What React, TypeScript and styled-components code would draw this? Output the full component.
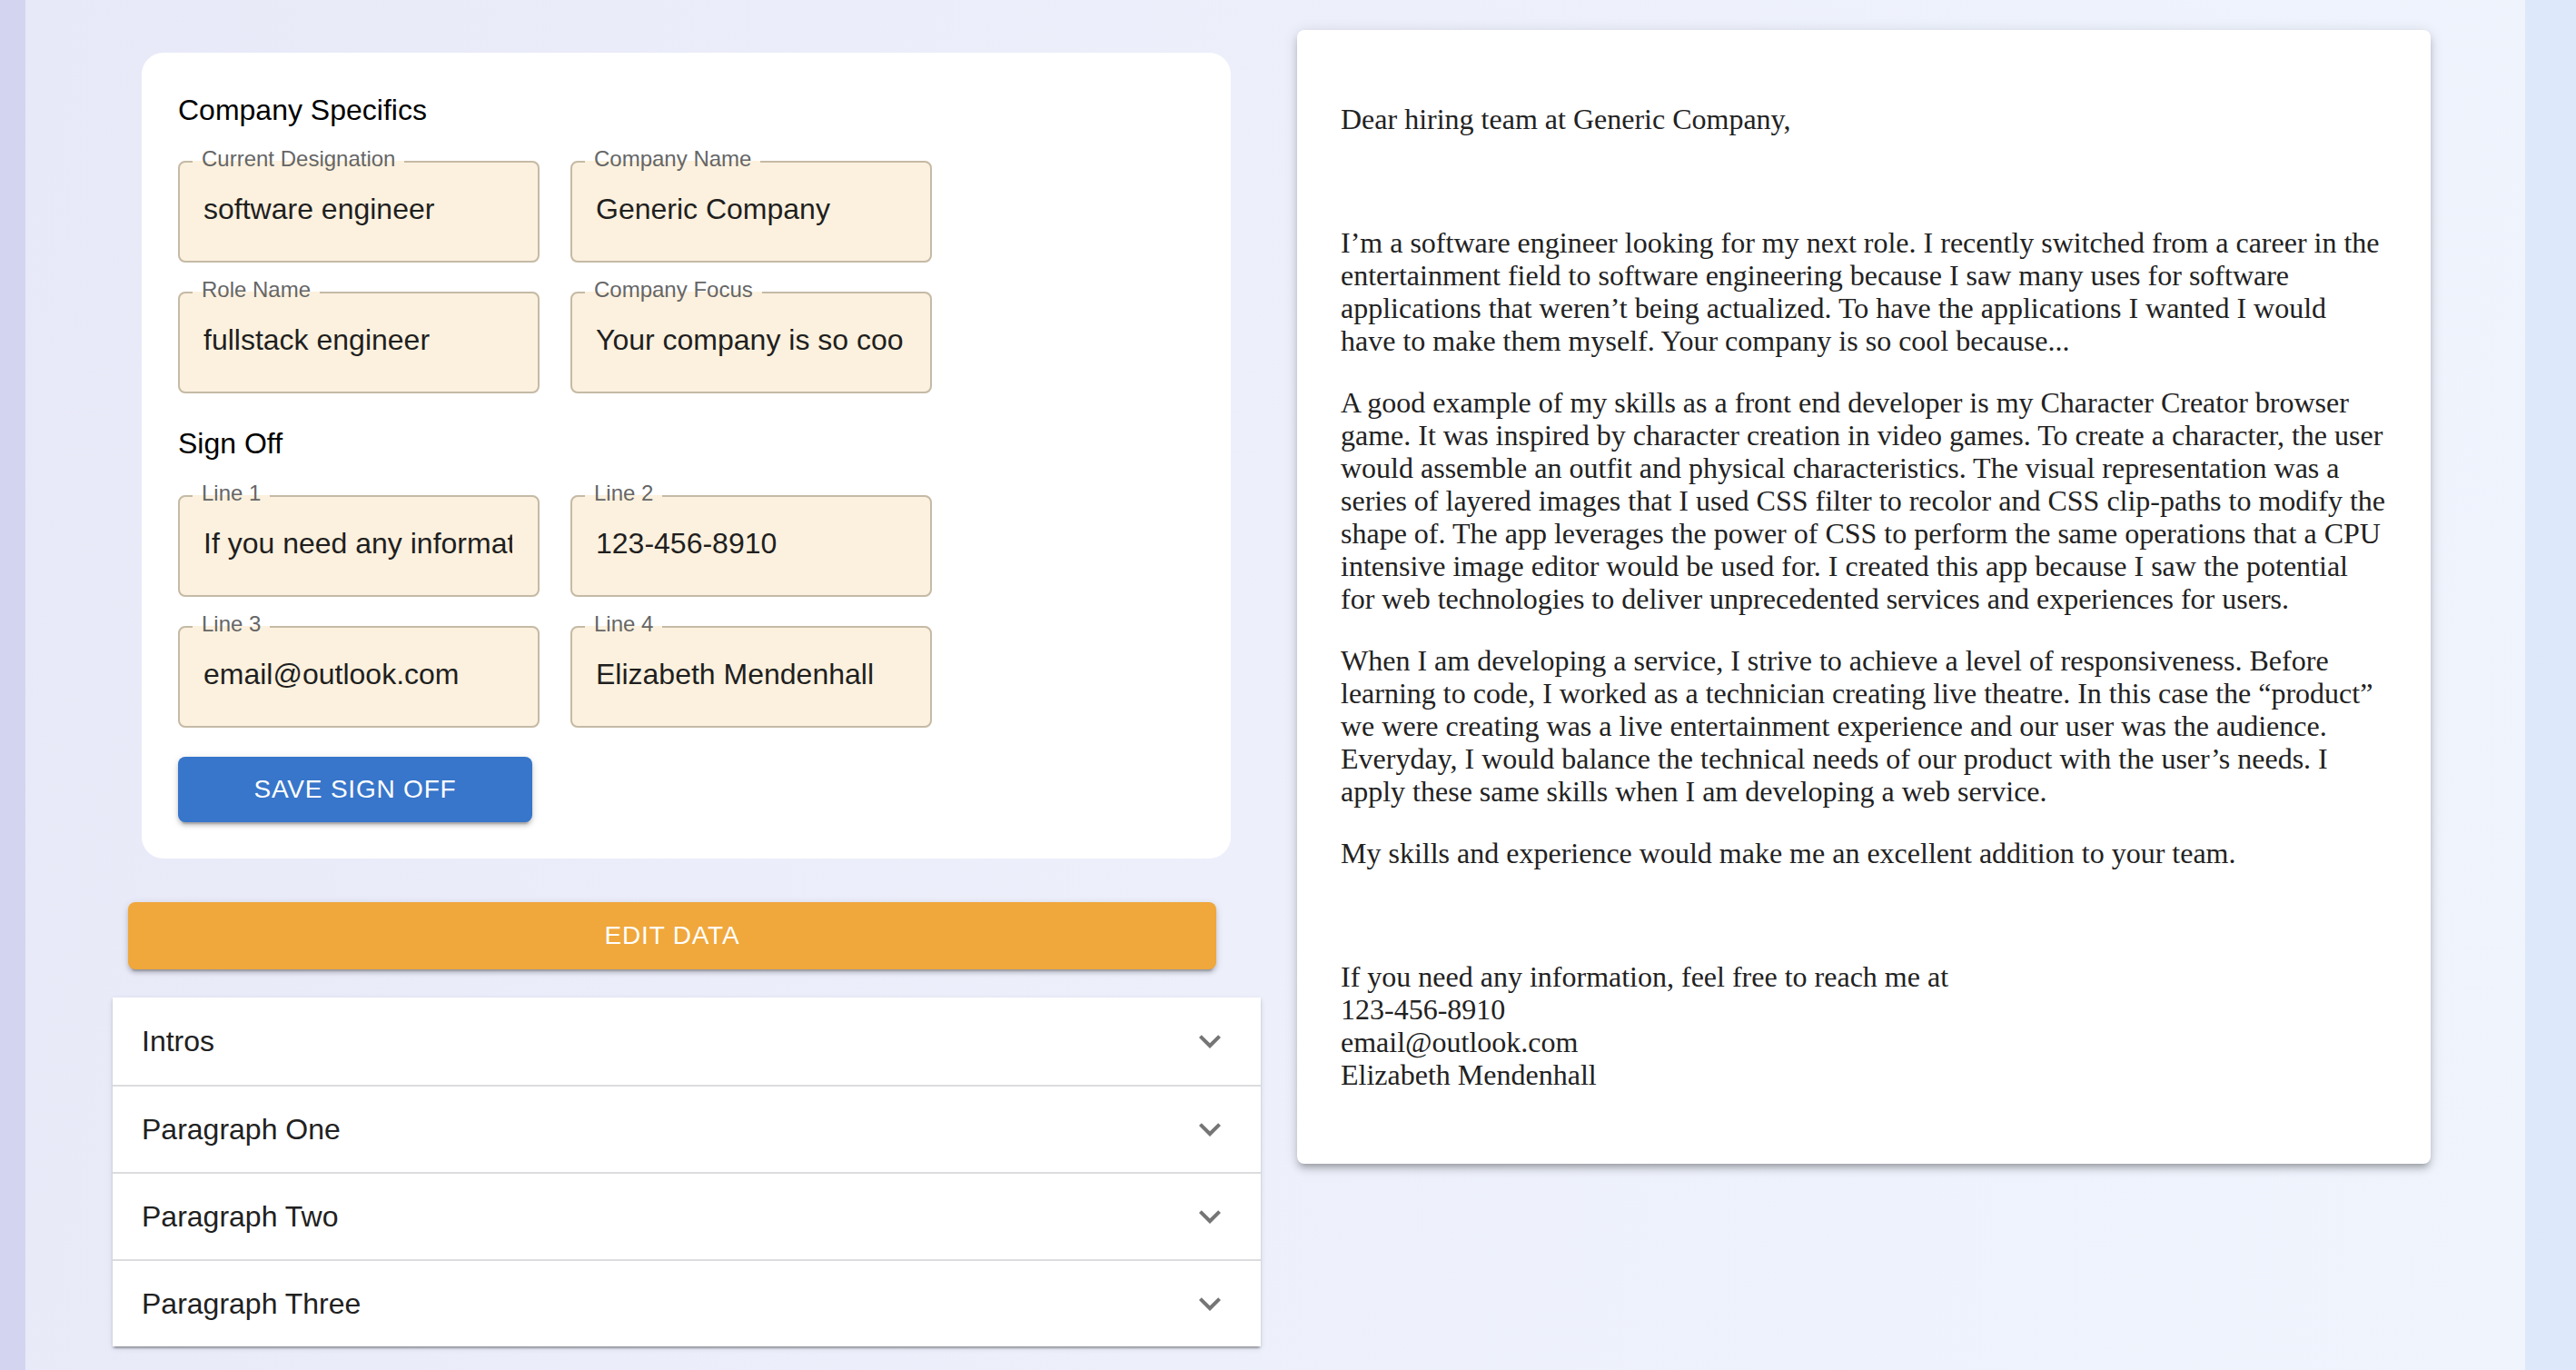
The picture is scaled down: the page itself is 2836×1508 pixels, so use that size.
import React from "react";
import styled, { createGlobalStyle } from "styled-components";
import { MdExpandMore } from "react-icons/md";

const GlobalStyle = createGlobalStyle`
  html, body {
    margin: 0;
    padding: 0;
  }
  body {
    background: linear-gradient(90deg, #d3d4f0 0%, #dde9fb 100%);
    font-family: "Liberation Sans", Arial, sans-serif;
    overflow: hidden;
  }
  * {
    box-sizing: border-box;
  }
`;

const Page = styled.div`
  margin: 0 56px 0 28px;
  min-height: 100vh;
  padding-left: 96px;
  display: flex;
  align-items: flex-start;
  gap: 40px;
  background: linear-gradient(100deg, #e8e9f8 0%, #edf0fb 50%, #eff4fd 100%);
`;

const LeftColumn = styled.div`
  width: 1264px;
  display: flex;
  flex-direction: column;
  padding-top: 58px;
`;

const FormCard = styled.section`
  margin: 0 33px 0 32px;
  background: #ffffff;
  border-radius: 24px;
  padding: 45px 40px 40px;
  display: flex;
  flex-direction: column;
  align-items: flex-start;
`;

const SectionTitle = styled.h2<{ $top?: number }>`
  margin: ${(p) => p.$top ?? 0}px 0 0;
  font-size: 32px;
  line-height: 37px;
  font-weight: 400;
  color: #000000;
`;

const FieldGrid = styled.div<{ $top: number }>`
  margin-top: ${(p) => p.$top}px;
  display: grid;
  grid-template-columns: repeat(2, 398px);
  column-gap: 34px;
  row-gap: 18px;
`;

const FieldFrame = styled.fieldset`
  margin: 0;
  min-width: 0;
  padding: 0 28px 19px 26px;
  border: 2px solid #c5baa6;
  border-radius: 8px;
  background: #fcf1de;
`;

const FieldLabel = styled.legend`
  margin-left: -12px;
  padding: 0 10px 6px;
  font-size: 24px;
  line-height: 24px;
  color: #666666;
`;

const FieldInput = styled.input`
  display: block;
  width: 100%;
  height: 75px;
  padding: 0;
  border: none;
  outline: none;
  background: transparent;
  font-family: "Liberation Sans", Arial, sans-serif;
  font-size: 32px;
  color: #1f1f1f;
`;

const ActionButton = styled.button<{ $tone: "blue" | "orange" }>`
  border: none;
  border-radius: 8px;
  color: #ffffff;
  font-family: "Liberation Sans", Arial, sans-serif;
  font-size: 28px;
  letter-spacing: 0.8px;
  text-transform: uppercase;
  background: ${(p) => (p.$tone === "blue" ? "#3776ca" : "#f0a73b")};
  box-shadow: 0 6px 2px -4px rgba(0, 0, 0, 0.2), 0 4px 4px 0 rgba(0, 0, 0, 0.14),
    0 2px 10px 0 rgba(0, 0, 0, 0.12);
  cursor: pointer;
`;

const SaveButton = styled(ActionButton)`
  margin-top: 32px;
  width: 390px;
  height: 72px;
`;

const EditButton = styled(ActionButton)`
  margin: 48px 49px 0 17px;
  height: 74px;
`;

const Accordion = styled.div`
  margin-top: 31px;
  background: #ffffff;
  box-shadow: 0 4px 2px -2px rgba(0, 0, 0, 0.2), 0 2px 2px 0 rgba(0, 0, 0, 0.14),
    0 2px 6px 0 rgba(0, 0, 0, 0.12);
`;

const AccordionRow = styled.div`
  height: 96px;
  padding: 0 32px;
  display: flex;
  align-items: center;
  justify-content: space-between;
  font-size: 32px;
  color: #212121;
  & + & {
    border-top: 2px solid #dcdcdf;
  }
  svg {
    color: #757575;
  }
`;

const LetterCard = styled.article`
  margin-top: 33px;
  width: 1248px;
  background: #ffffff;
  border-radius: 8px;
  padding: 48px;
  box-shadow: 0 6px 6px -4px rgba(0, 0, 0, 0.2), 0 6px 8px 0 rgba(0, 0, 0, 0.14),
    0 2px 16px 0 rgba(0, 0, 0, 0.12);
  font-family: "Liberation Serif", "Times New Roman", serif;
  font-size: 32px;
  line-height: 36px;
  color: #222222;
`;

const LetterParagraph = styled.p`
  margin: 32px 0;
`;

const companyFields = [
  { label: "Current Designation", value: "software engineer" },
  { label: "Company Name", value: "Generic Company" },
  { label: "Role Name", value: "fullstack engineer" },
  { label: "Company Focus", value: "Your company is so cool because..." },
];

const signOffFields = [
  { label: "Line 1", value: "If you need any information, feel free to reach me at" },
  { label: "Line 2", value: "123-456-8910" },
  { label: "Line 3", value: "email@outlook.com" },
  { label: "Line 4", value: "Elizabeth Mendenhall" },
];

const sections = ["Intros", "Paragraph One", "Paragraph Two", "Paragraph Three"];

function Field({ label, value }: { label: string; value: string }) {
  return (
    <FieldFrame>
      <FieldLabel>{label}</FieldLabel>
      <FieldInput value={value} readOnly />
    </FieldFrame>
  );
}

export default function App() {
  return (
    <>
      <GlobalStyle />
      <Page>
        <LeftColumn>
          <FormCard>
            <SectionTitle>Company Specifics</SectionTitle>
            <FieldGrid $top={23}>
              {companyFields.map((f) => (
                <Field key={f.label} {...f} />
              ))}
            </FieldGrid>
            <SectionTitle $top={37}>Sign Off</SectionTitle>
            <FieldGrid $top={24}>
              {signOffFields.map((f) => (
                <Field key={f.label} {...f} />
              ))}
            </FieldGrid>
            <SaveButton $tone="blue">Save Sign Off</SaveButton>
          </FormCard>
          <EditButton $tone="orange">Edit Data</EditButton>
          <Accordion>
            {sections.map((s) => (
              <AccordionRow key={s}>
                <span>{s}</span>
                <MdExpandMore size={48} />
              </AccordionRow>
            ))}
          </Accordion>
        </LeftColumn>
        <LetterCard>
          <LetterParagraph>Dear hiring team at Generic Company,</LetterParagraph>
          <LetterParagraph>
            <br />
          </LetterParagraph>
          <LetterParagraph>
            I’m a software engineer looking for my next role. I recently switched from a career in the
            entertainment field to software engineering because I saw many uses for software
            applications that weren’t being actualized. To have the applications I wanted I would
            have to make them myself. Your company is so cool because...
          </LetterParagraph>
          <LetterParagraph>
            A good example of my skills as a front end developer is my Character Creator browser
            game. It was inspired by character creation in video games. To create a character, the
            user would assemble an outfit and physical characteristics. The visual representation was
            a series of layered images that I used CSS filter to recolor and CSS clip-paths to modify
            the shape of. The app leverages the power of CSS to perform the same operations that a
            CPU intensive image editor would be used for. I created this app because I saw the
            potential for web technologies to deliver unprecedented services and experiences for
            users.
          </LetterParagraph>
          <LetterParagraph>
            When I am developing a service, I strive to achieve a level of responsiveness. Before
            learning to code, I worked as a technician creating live theatre. In this case the
            “product” we were creating was a live entertainment experience and our user was the
            audience. Everyday, I would balance the technical needs of our product with the user’s
            needs. I apply these same skills when I am developing a web service.
          </LetterParagraph>
          <LetterParagraph>
            My skills and experience would make me an excellent addition to your team.
          </LetterParagraph>
          <LetterParagraph>
            <br />
          </LetterParagraph>
          <LetterParagraph>
            If you need any information, feel free to reach me at
            <br />
            123-456-8910
            <br />
            email@outlook.com
            <br />
            Elizabeth Mendenhall
          </LetterParagraph>
        </LetterCard>
      </Page>
    </>
  );
}
